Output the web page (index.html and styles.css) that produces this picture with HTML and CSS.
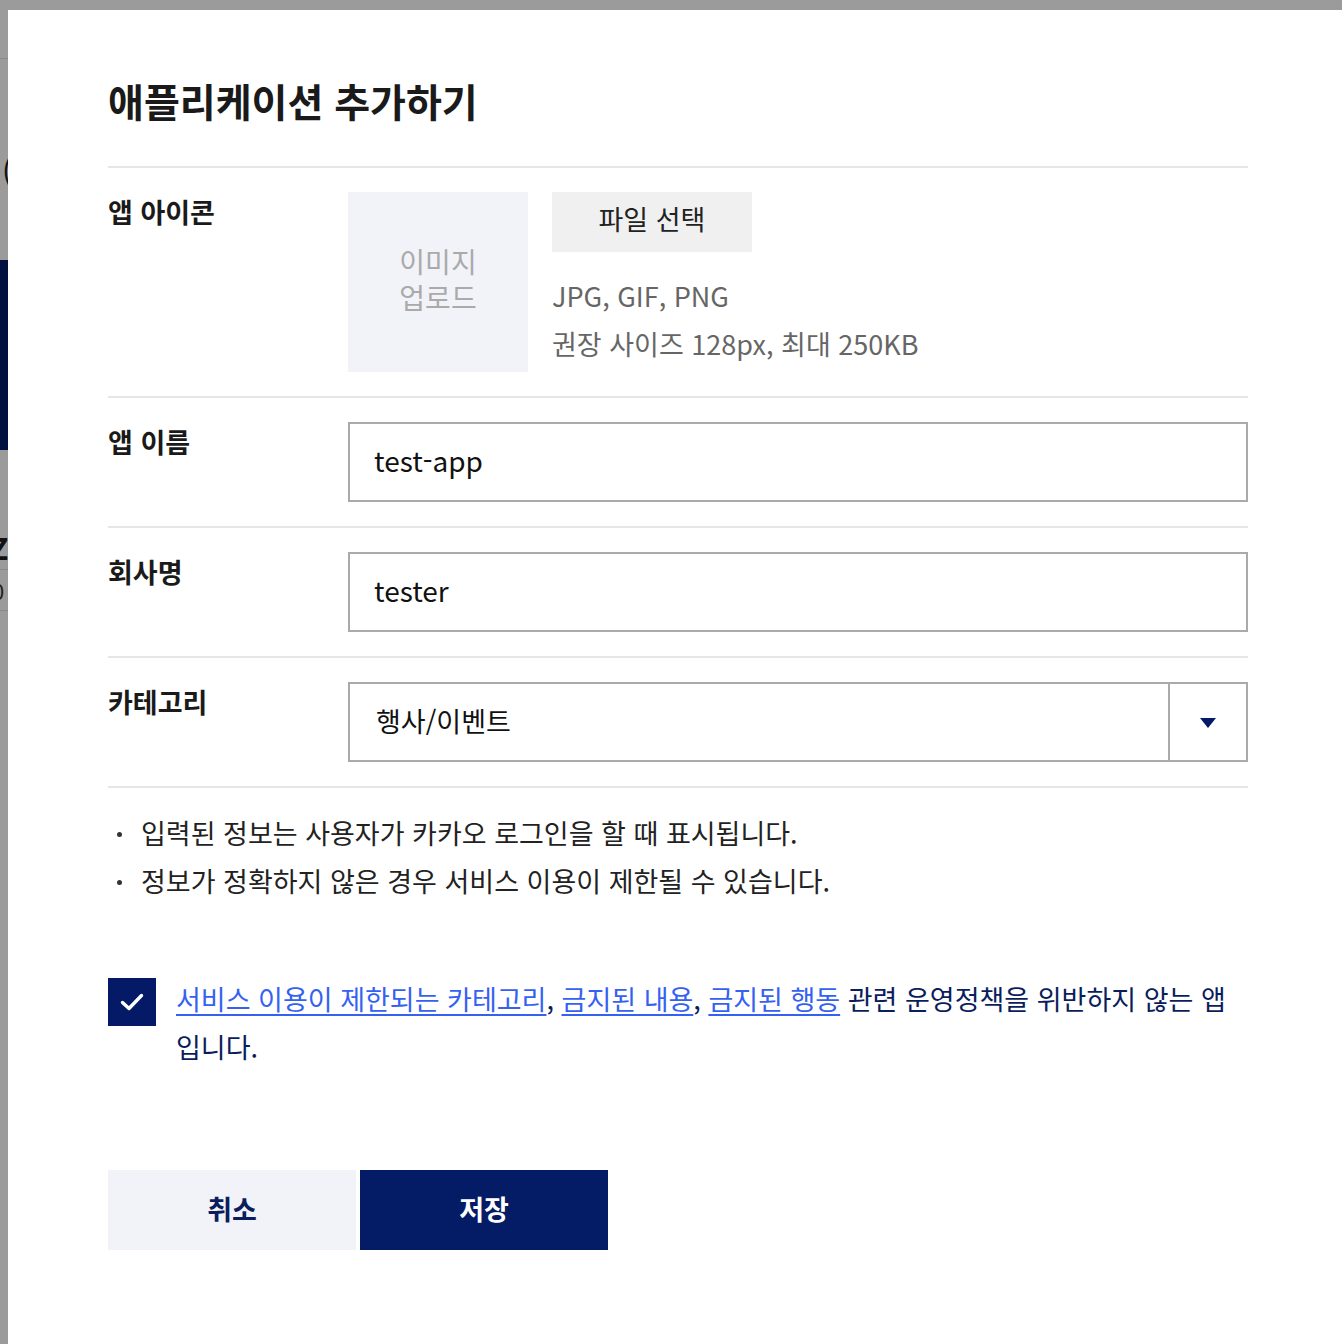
FILE: index.html
```html
<!DOCTYPE html>
<html lang="ko">
<head>
<meta charset="utf-8">
<title>애플리케이션 추가하기</title>
<link rel="stylesheet" href="styles.css">
</head>
<body>
<div class="backdrop">
  <div class="bd-line"></div>
  <div class="bd-paren">(</div>
  <div class="bd-navy"></div>
  <div class="bd-z">Z</div>
  <div class="bd-line2"></div>
  <div class="bd-zero">0</div>
  <div class="bd-line3"></div>
</div>
<div class="modal">
  <h1 class="title">애플리케이션 추가하기</h1>
  <div class="form">
    <div class="row">
      <div class="label">앱 아이콘</div>
      <div class="icon-field">
        <div class="icon-box">이미지<br>업로드</div>
        <div class="icon-info">
          <button class="file-btn" type="button">파일 선택</button>
          <p class="hint">JPG, GIF, PNG<br>권장 사이즈 128px, 최대 250KB</p>
        </div>
      </div>
    </div>
    <div class="row">
      <div class="label">앱 이름</div>
      <div class="input">test-app</div>
    </div>
    <div class="row">
      <div class="label">회사명</div>
      <div class="input">tester</div>
    </div>
    <div class="row">
      <div class="label">카테고리</div>
      <div class="select">
        <div class="select-value">행사/이벤트</div>
        <div class="select-arrow"><span class="tri"></span></div>
      </div>
    </div>
  </div>
  <ul class="notes">
    <li>입력된 정보는 사용자가 카카오 로그인을 할 때 표시됩니다.</li>
    <li>정보가 정확하지 않은 경우 서비스 이용이 제한될 수 있습니다.</li>
  </ul>
  <div class="agree">
    <span class="checkbox">
      <svg width="48" height="48" viewBox="0 0 48 48"><path d="M14.5 24.5 L21 30.5 L33.5 17.5" fill="none" stroke="#fff" stroke-width="3.4" stroke-linecap="round" stroke-linejoin="round"/></svg>
    </span>
    <p class="agree-text"><a href="#">서비스 이용이 제한되는 카테고리</a>, <a href="#">금지된 내용</a>, <a href="#">금지된 행동</a> 관련 운영정책을 위반하지 않는 앱입니다.</p>
  </div>
  <div class="actions">
    <button class="btn btn-cancel" type="button">취소</button>
    <button class="btn btn-save" type="button">저장</button>
  </div>
</div>
</body>
</html>
```
FILE: styles.css
```css
html, body {
  margin: 0;
  padding: 0;
}
body {
  background: #9b9b9b;
  display: flex;
  min-height: 1344px;
  font-family: "Noto Sans CJK KR", "Noto Sans", sans-serif;
  color: #222;
  overflow: hidden;
}
.backdrop {
  width: 8px;
  flex: 0 0 8px;
  overflow: hidden;
}
.bd-line {
  height: 1px;
  background: #8a8a8a;
  margin-top: 58px;
}
.bd-paren {
  margin-top: 96px;
  font-size: 30px;
  line-height: 30px;
  color: #111;
  margin-left: 2px;
}
.bd-navy {
  margin-top: 75px;
  height: 190px;
  background: #01113f;
}
.bd-z {
  margin-top: 82px;
  font-size: 30px;
  line-height: 30px;
  font-weight: 700;
  color: #111;
  margin-left: -10px;
}
.bd-line2 {
  margin-top: 7px;
  height: 1px;
  background: #8a8a8a;
}
.bd-zero {
  font-size: 22px;
  line-height: 40px;
  margin-left: -8px;
  color: #222;
}
.bd-line3 {
  height: 1px;
  background: #8a8a8a;
}
.modal {
  flex: 1;
  margin-top: 10px;
  background: #fff;
  padding: 64px 94px 0 100px;
}
.title {
  margin: 0 0 40px;
  font-size: 39px;
  line-height: 52px;
  font-weight: 700;
  color: #1a1a1a;
}
.form {
  border-top: 2px solid #e6e6e6;
}
.row {
  display: grid;
  grid-template-columns: 240px 1fr;
  padding: 24px 0;
  border-bottom: 2px solid #e6e6e6;
}
.label {
  font-size: 27px;
  line-height: 40px;
  font-weight: 700;
  color: #1a1a1a;
}
.icon-field {
  display: flex;
  gap: 24px;
}
.icon-box {
  box-sizing: border-box;
  width: 180px;
  height: 180px;
  padding-bottom: 6px;
  background: #f2f3f8;
  color: #aaa;
  font-size: 28px;
  line-height: 36px;
  display: flex;
  align-items: center;
  justify-content: center;
  text-align: center;
}
.file-btn {
  display: block;
  width: 200px;
  height: 60px;
  border: 0;
  background: #f0f0f0;
  font-family: inherit;
  font-size: 27px;
  color: #222;
  padding: 0 0 7px;
}
.hint {
  margin: 20px 0 0;
  font-size: 27px;
  line-height: 48px;
  color: #666;
}
.input {
  box-sizing: border-box;
  height: 80px;
  border: 2px solid #aaa;
  padding: 0 24px 3px;
  font-size: 28px;
  line-height: 73px;
  color: #111;
}
.select {
  box-sizing: border-box;
  height: 80px;
  border: 2px solid #aaa;
  display: flex;
}
.select-value {
  flex: 1;
  padding: 0 24px 0 26px;
  font-size: 27px;
  line-height: 74px;
  color: #111;
}
.select-arrow {
  width: 76px;
  border-left: 2px solid #aaa;
  display: flex;
  align-items: center;
  justify-content: center;
}
.tri {
  width: 0;
  height: 0;
  border-left: 8px solid transparent;
  border-right: 8px solid transparent;
  border-top: 10px solid #041a66;
  margin-top: 1px;
}
.notes {
  list-style: none;
  margin: 21px 0 0;
  padding: 0;
}
.notes li {
  font-size: 27px;
  line-height: 48px;
  color: #222;
  padding-left: 33px;
  position: relative;
}
.notes li::before {
  content: "";
  position: absolute;
  left: 9px;
  top: 23px;
  width: 5px;
  height: 5px;
  border-radius: 50%;
  background: #333;
}
.agree {
  display: flex;
  align-items: flex-start;
  gap: 20px;
  margin-top: 70px;
}
.checkbox {
  flex: 0 0 48px;
  width: 48px;
  height: 48px;
  margin-top: 3px;
  background: #041a66;
  display: block;
}
.checkbox svg {
  display: block;
}
.agree-text {
  margin: 0;
  font-size: 27px;
  line-height: 48px;
  color: #0a1d5c;
}
.agree-text a {
  color: #3461f2;
  text-decoration: underline;
  text-underline-offset: 4px;
  text-decoration-thickness: 2px;
}
.actions {
  display: flex;
  gap: 4px;
  margin-top: 99px;
}
.btn {
  width: 248px;
  height: 80px;
  border: 0;
  padding: 0 0 4px;
  font-family: inherit;
  font-size: 27px;
  font-weight: 700;
}
.btn-cancel {
  background: #f2f3f8;
  color: #0a1d5c;
}
.btn-save {
  background: #041b66;
  color: #fff;
}
```
